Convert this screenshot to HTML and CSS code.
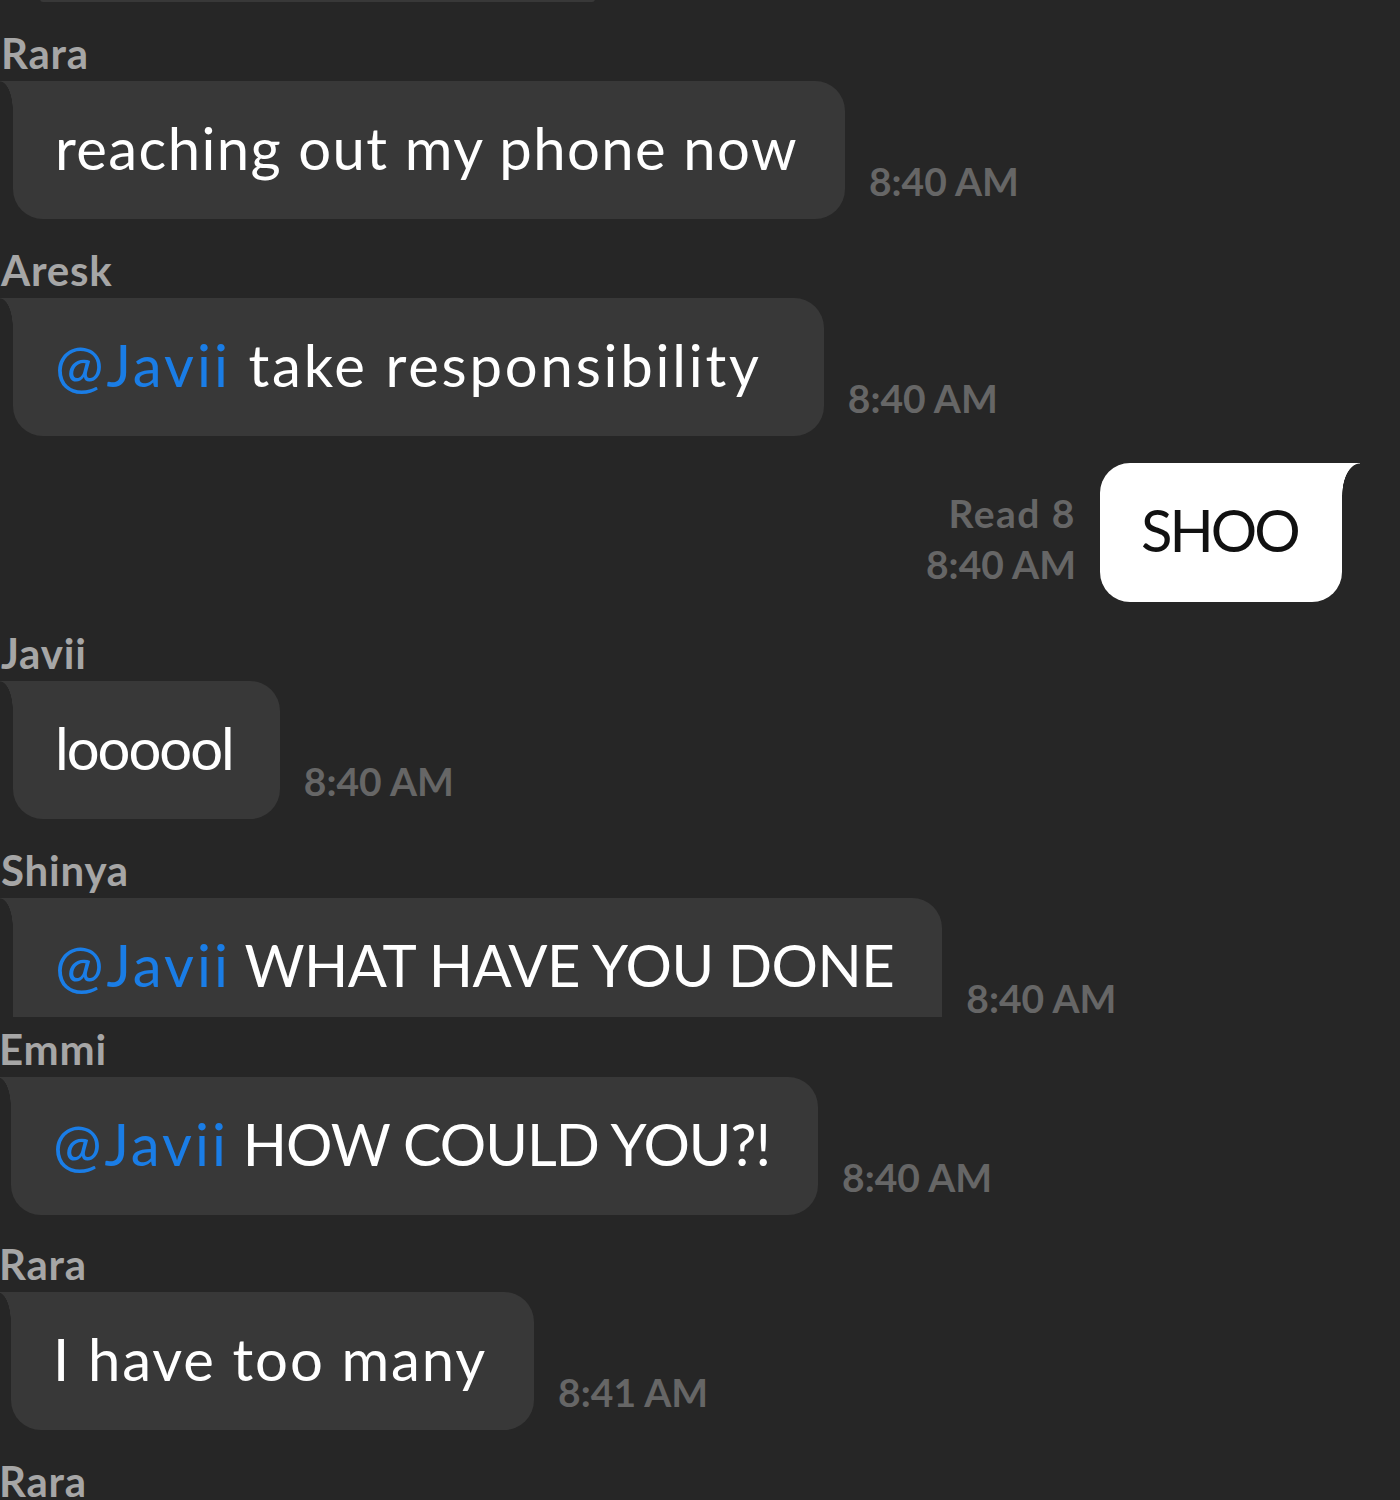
FILE: index.html
```html
<!DOCTYPE html>
<html lang="en">

<head>
    <meta charset="UTF-8">
    <title>Chat</title>
    <link rel="stylesheet" href="styles.css">
</head>

<body>
    <div class="chat">
        <div class="prev-bubble"></div>

        <div class="msg">
            <div class="name">Rara</div>
            <div class="row">
                <div class="bubble sp-reaching">reaching out my phone now</div>
                <span class="time">8:40 AM</span>
            </div>
        </div>

        <div class="msg">
            <div class="name">Aresk</div>
            <div class="row">
                <div class="bubble sp-take"><span class="mention">@Javii</span> take responsibility</div>
                <span class="time">8:40 AM</span>
            </div>
        </div>

        <div class="msg-out">
            <div class="meta">
                <span class="read">Read 8</span>
                <span>8:40 AM</span>
            </div>
            <div class="bubble-out">SHOO</div>
        </div>

        <div class="msg">
            <div class="name">Javii</div>
            <div class="row">
                <div class="bubble sp-lol">loooool</div>
                <span class="time">8:40 AM</span>
            </div>
        </div>

        <div class="msg">
            <div class="name">Shinya</div>
            <div class="row">
                <div class="bubble cut sp-what"><span class="mention">@Javii</span> WHAT HAVE YOU DONE</div>
                <span class="time time-low">8:40 AM</span>
            </div>
        </div>

        <div class="lower">
            <div class="msg msg-emmi">
                <div class="name">Emmi</div>
                <div class="row">
                    <div class="bubble sp-how"><span class="mention">@Javii</span> HOW COULD YOU?!</div>
                    <span class="time">8:40 AM</span>
                </div>
            </div>

            <div class="msg msg-many">
                <div class="name">Rara</div>
                <div class="row">
                    <div class="bubble sp-many">I have too many</div>
                    <span class="time">8:41 AM</span>
                </div>
            </div>

            <div class="msg">
                <div class="name name-last">Rara</div>
            </div>
        </div>
    </div>
</body>

</html>
```

FILE: styles.css
```css
html, body {
    margin: 0;
    height: 1500px;
    overflow: hidden;
    background-color: #262626;
}

.chat {
    margin-top: -1px;
    font-family: "Lato", "Noto Sans", sans-serif;
}

.prev-bubble {
    width: 555px;
    height: 3px;
    margin-left: 40px;
    background-color: #383838;
    border-radius: 0 0 4px 4px;
}

.msg {
    padding-top: 33px;
}

.msg-emmi {
    padding-top: 14px;
}

.msg-many {
    padding-top: 31px;
}

.name {
    height: 46px;
    padding-left: 1px;
    line-height: 36px;
    font-size: 42px;
    font-weight: 700;
    letter-spacing: 0.8px;
    color: #a6a6a6;
}

.name-last {
    height: 36px;
}

.row {
    display: flex;
    align-items: flex-end;
    gap: 24px;
}

.bubble {
    position: relative;
    box-sizing: border-box;
    height: 138px;
    margin-left: 13px;
    padding: 0 47px 0 42px;
    line-height: 134px;
    font-size: 58px;
    white-space: nowrap;
    color: #fff;
    background-color: #383838;
    border-radius: 0 30px 30px 30px;
}

/* tail on the top left corner */
.bubble::before {
    content: "";
    position: absolute;
    top: 0;
    left: -13px;
    width: 13px;
    height: 30px;
    background: radial-gradient(ellipse 13px 30px at 0 100%, transparent 97%, #383838 100%);
}

.bubble.cut {
    height: 119px;
    border-radius: 0 30px 0 0;
}

.sp-reaching { letter-spacing: 1.4px; }
.sp-take { padding-right: 62px; letter-spacing: 2.8px; }
.sp-lol { letter-spacing: -2px; }
.sp-what { padding-right: 48px; letter-spacing: -0.5px; }
.sp-how { padding-right: 48px; letter-spacing: -1px; }
.sp-many { letter-spacing: 1.9px; }

.mention {
    letter-spacing: 3px;
    color: #1a7de6;
}

.time {
    padding-bottom: 13px;
    line-height: 50px;
    font-size: 39px;
    font-weight: 700;
    white-space: nowrap;
    color: #666;
}

.time-low {
    margin-bottom: -19px;
}

.msg-out {
    display: flex;
    justify-content: flex-end;
    align-items: center;
    gap: 24px;
    margin-top: 27px;
    padding-right: 58px;
}

.meta {
    display: flex;
    flex-direction: column;
    align-items: flex-end;
    padding-top: 12px;
    line-height: 51px;
    font-size: 39px;
    font-weight: 700;
    color: #666;
}

.read {
    letter-spacing: 1.5px;
}

.bubble-out {
    position: relative;
    box-sizing: border-box;
    width: 242px;
    height: 139px;
    padding-left: 41px;
    line-height: 134px;
    font-size: 58px;
    letter-spacing: -3px;
    color: #111;
    background-color: #fff;
    border-radius: 30px 0 30px 30px;
}

/* tail on the top right corner */
.bubble-out::after {
    content: "";
    position: absolute;
    top: 0;
    right: -18px;
    width: 18px;
    height: 32px;
    background: radial-gradient(ellipse 18px 32px at 100% 100%, transparent 97%, #fff 100%);
}

/* everything from Emmi down sits 2px further left in the picture */
.lower {
    margin-left: -2px;
}
```
